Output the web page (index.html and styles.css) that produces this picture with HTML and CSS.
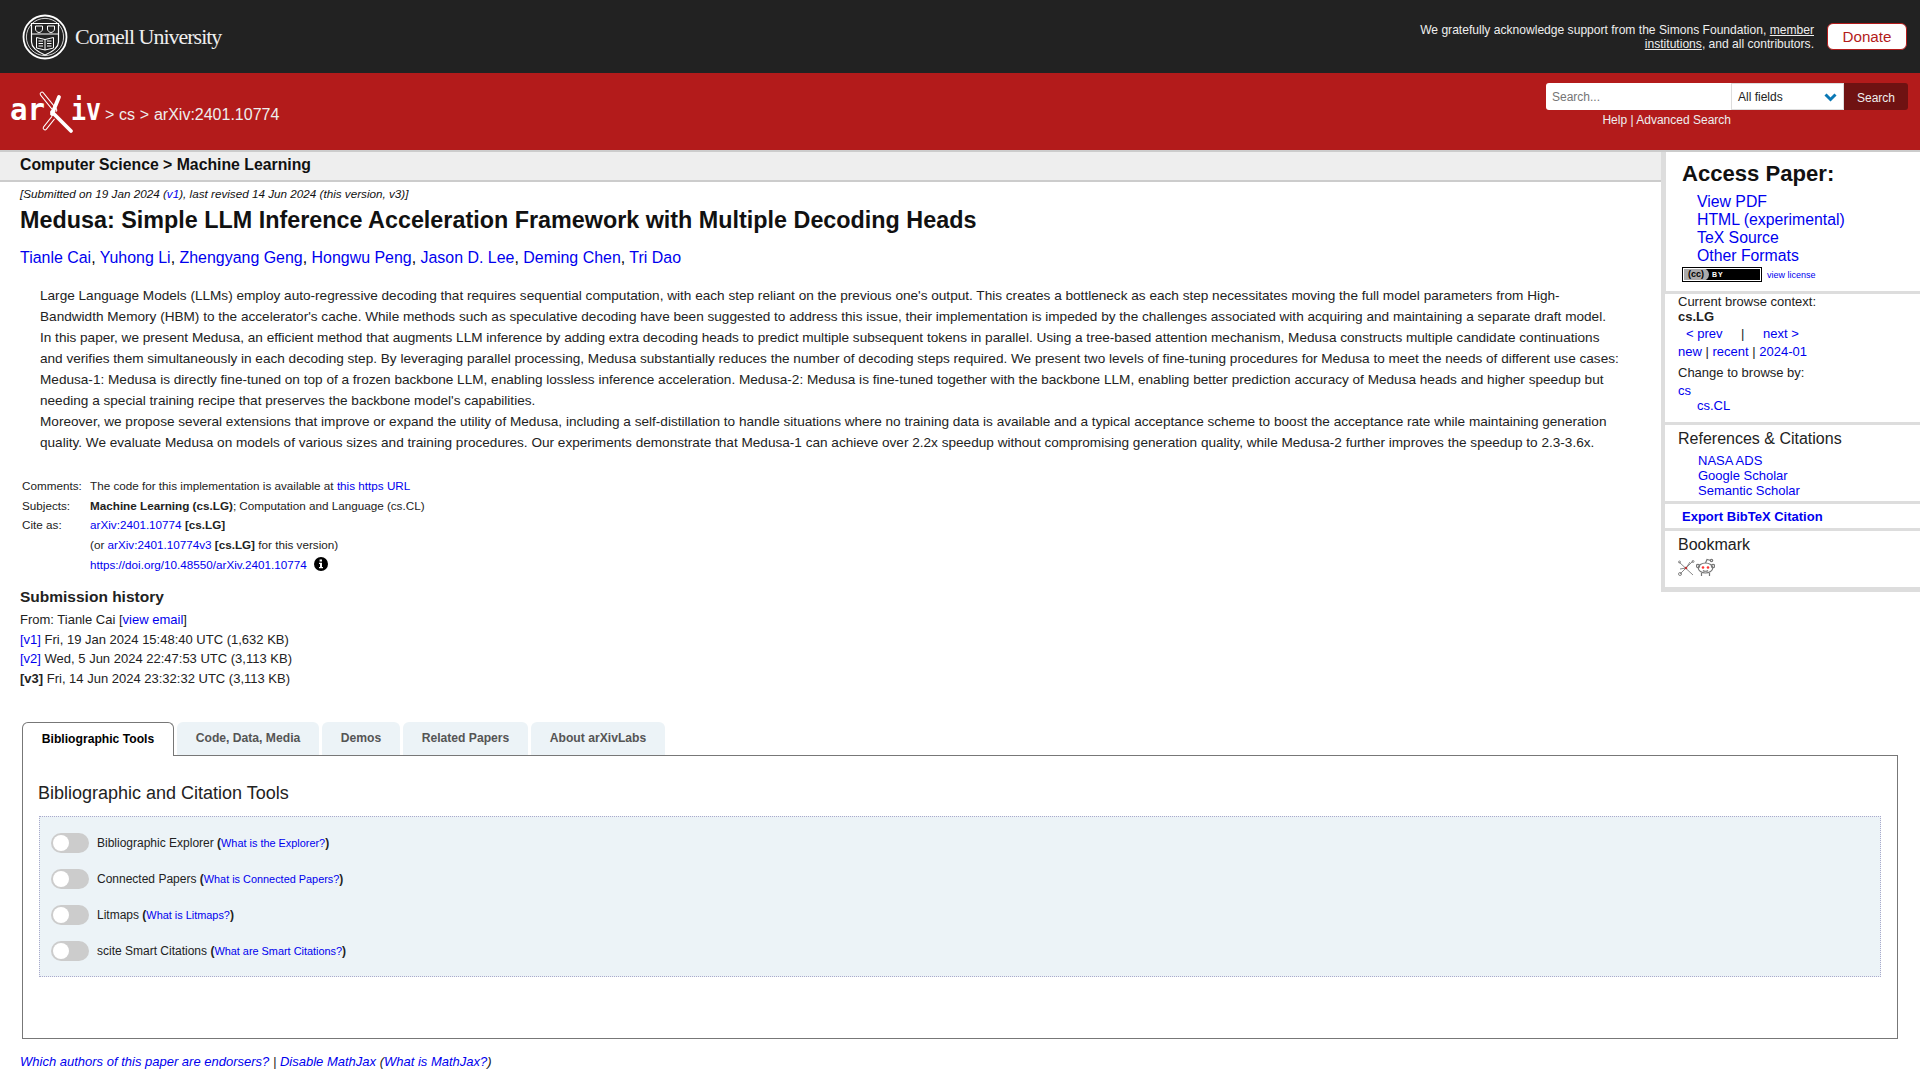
FILE: index.html
```html
<!DOCTYPE html>
<html lang="en">
<head>
<meta charset="utf-8">
<title>Medusa: Simple LLM Inference Acceleration Framework with Multiple Decoding Heads</title>
<link rel="stylesheet" href="styles.css">
</head>
<body>
<header class="cu-bar">
  <div class="cu-logo">
    <svg class="seal" width="46" height="46" viewBox="0 0 46 46" fill="none" stroke="#fff">
      <circle cx="23" cy="23" r="21.5" stroke-width="1.8"/>
      <circle cx="23" cy="23" r="18.6" stroke-width=".8"/>
      <path d="M9.5 9.5H36.5V28C36.5 34 30 38 23 41C16 38 9.5 34 9.5 28Z" stroke-width="1.2"/>
      <path d="M9.5 20H36.5" stroke-width="1"/>
      <path d="M13.5 12H20.5V15C20.5 17 18.5 18.5 17 18.5C15.5 18.5 13.5 17 13.5 15ZM25.5 12H32.5V15C32.5 17 30.5 18.5 29 18.5C27.5 18.5 25.5 17 25.5 15Z" stroke-width="1"/>
      <path d="M14.5 23.5L23 25.5L31.5 23.5V34L23 36L14.5 34ZM23 25.5V36M16.5 27H21M16.5 29.5H21M16.5 32H21M25 27H29.5M25 29.5H29.5M25 32H29.5" stroke-width="1"/>
    </svg>
    <span class="cu-name">Cornell University</span>
  </div>
  <div class="cu-right">
    <p class="ack">We gratefully acknowledge support from the Simons Foundation, <a href="#">member institutions</a>, and all contributors.</p>
    <a class="donate" href="#">Donate</a>
  </div>
</header>

<div class="red-bar">
  <div class="crumbs">
    <svg class="arxiv-logo" width="92" height="42" viewBox="0 0 92 42">
      <text class="logo-text" x="0" y="28" textLength="35" lengthAdjust="spacingAndGlyphs">ar</text>
      <text class="logo-text" x="61" y="28" textLength="30" lengthAdjust="spacingAndGlyphs">iv</text>
      <path d="M32 2L45 18" stroke="#fff" stroke-width="4.6" stroke-linecap="round"/>
      <path d="M32 2L45 18" stroke="#b31b1b" stroke-width="2.6" stroke-linecap="round"/>
      <path d="M43 26L35 36" stroke="#fff" stroke-width="4.6" stroke-linecap="round"/>
      <path d="M43 26L35 36" stroke="#b31b1b" stroke-width="2.6" stroke-linecap="round"/>
      <path d="M42 20L61 40" stroke="#b31b1b" stroke-width="6"/>
      <path d="M42 20L61 39" stroke="#fff" stroke-width="3.8" stroke-linecap="round"/>
      <path d="M49 5L42 22" stroke="#fff" stroke-width="3.8" stroke-linecap="round"/>
    </svg>
    <span class="crumb-text">&gt; <a href="#">cs</a> &gt; arXiv:2401.10774</span>
  </div>
  <div class="search-area">
    <form class="search-form">
      <span class="search-input">Search...</span>
      <span class="search-select">All fields
        <svg width="13" height="9" viewBox="0 0 13 9" fill="none" stroke="#0a78b5" stroke-width="3"><path d="M1.5 1.5L6.5 6.5L11.5 1.5"/></svg>
      </span>
      <span class="search-btn">Search</span>
    </form>
    <div class="search-help"><a href="#">Help</a> | <a href="#">Advanced Search</a></div>
  </div>
</div>
<div class="rule"></div>

<div class="columns">
  <main class="left">
    <div class="subheader">Computer Science &gt; Machine Learning</div>
    <div class="dateline">[Submitted on 19 Jan 2024 (<a href="#">v1</a>), last revised 14 Jun 2024 (this version, v3)]</div>
    <h1 class="title">Medusa: Simple LLM Inference Acceleration Framework with Multiple Decoding Heads</h1>
    <div class="authors"><a href="#">Tianle Cai</a>, <a href="#">Yuhong Li</a>, <a href="#">Zhengyang Geng</a>, <a href="#">Hongwu Peng</a>, <a href="#">Jason D. Lee</a>, <a href="#">Deming Chen</a>, <a href="#">Tri Dao</a></div>
    <blockquote class="abstract">Large Language Models (LLMs) employ auto-regressive decoding that requires sequential computation, with each step reliant on the previous one's output. This creates a bottleneck as each step necessitates moving the full model parameters from High-Bandwidth Memory (HBM) to the accelerator's cache. While methods such as speculative decoding have been suggested to address this issue, their implementation is impeded by the challenges associated with acquiring and maintaining a separate draft model.<br>
In this paper, we present Medusa, an efficient method that augments LLM inference by adding extra decoding heads to predict multiple subsequent tokens in parallel. Using a tree-based attention mechanism, Medusa constructs multiple candidate continuations and verifies them simultaneously in each decoding step. By leveraging parallel processing, Medusa substantially reduces the number of decoding steps required. We present two levels of fine-tuning procedures for Medusa to meet the needs of different use cases:<br>
Medusa-1: Medusa is directly fine-tuned on top of a frozen backbone LLM, enabling lossless inference acceleration. Medusa-2: Medusa is fine-tuned together with the backbone LLM, enabling better prediction accuracy of Medusa heads and higher speedup but needing a special training recipe that preserves the backbone model's capabilities.<br>
Moreover, we propose several extensions that improve or expand the utility of Medusa, including a self-distillation to handle situations where no training data is available and a typical acceptance scheme to boost the acceptance rate while maintaining generation quality. We evaluate Medusa on models of various sizes and training procedures. Our experiments demonstrate that Medusa-1 can achieve over 2.2x speedup without compromising generation quality, while Medusa-2 further improves the speedup to 2.3-3.6x.</blockquote>
    <table class="meta">
      <tr><td class="lab">Comments:</td><td>The code for this implementation is available at <a href="#">this https URL</a></td></tr>
      <tr><td class="lab">Subjects:</td><td><b>Machine Learning (cs.LG)</b>; Computation and Language (cs.CL)</td></tr>
      <tr><td class="lab">Cite as:</td><td><a href="#">arXiv:2401.10774</a> <b>[cs.LG]</b></td></tr>
      <tr><td></td><td>(or <a href="#">arXiv:2401.10774v3</a> <b>[cs.LG]</b> for this version)</td></tr>
      <tr><td></td><td><a href="#">https://doi.org/10.48550/arXiv.2401.10774</a>
        <svg class="info" width="14" height="14" viewBox="0 0 14 14"><circle cx="7" cy="7" r="7" fill="#000"/><path d="M5.6 2.6H8V4.6H5.6ZM5 5.8H8V9.9H9V11.2H5V9.9H6V7.1H5Z" fill="#fff"/></svg></td></tr>
    </table>
    <section class="history">
      <h2>Submission history</h2>
      <div>From: Tianle Cai [<a href="#">view email</a>]</div>
      <div><a href="#">[v1]</a> Fri, 19 Jan 2024 15:48:40 UTC (1,632 KB)</div>
      <div><a href="#">[v2]</a> Wed, 5 Jun 2024 22:47:53 UTC (3,113 KB)</div>
      <div><b>[v3]</b> Fri, 14 Jun 2024 23:32:32 UTC (3,113 KB)</div>
    </section>
  </main>

  <aside class="side">
    <section class="s-access">
      <h2>Access Paper:</h2>
      <ul>
        <li><a href="#">View PDF</a></li>
        <li><a href="#">HTML (experimental)</a></li>
        <li><a href="#">TeX Source</a></li>
        <li><a href="#">Other Formats</a></li>
      </ul>
      <div class="license">
        <span class="cc"><span class="cc-l">(cc)</span><span class="cc-r">BY</span></span>
        <a href="#">view license</a>
      </div>
    </section>
    <section class="s-browse">
      <div>Current browse context:</div>
      <div class="ctx">cs.LG</div>
      <div class="prevnext"><a href="#">&lt;&nbsp;prev</a><span>|</span><a href="#">next&nbsp;&gt;</a></div>
      <div class="newrec"><a href="#">new</a> | <a href="#">recent</a> | <a href="#">2024-01</a></div>
      <div class="change">Change to browse by:</div>
      <div class="cs"><a href="#">cs</a></div>
      <div class="cscl"><a href="#">cs.CL</a></div>
    </section>
    <section class="s-refs">
      <h3>References &amp; Citations</h3>
      <ul>
        <li><a href="#">NASA ADS</a></li>
        <li><a href="#">Google Scholar</a></li>
        <li><a href="#">Semantic Scholar</a></li>
      </ul>
    </section>
    <section class="s-export"><a href="#">Export BibTeX Citation</a></section>
    <section class="s-book">
      <h3>Bookmark</h3>
      <div class="book-icons">
        <svg width="17" height="17" viewBox="0 0 17 17" fill="none" stroke="#888" stroke-width="1"><path d="M1 2L15 15M15 1L2 14M2 9L8 8M8 8L12 2"/><circle cx="8" cy="8" r="1.3" fill="#b33" stroke="none"/><circle cx="2" cy="14" r="1.5"/><circle cx="15" cy="1.5" r="1"/><circle cx="1.5" cy="2" r="1"/></svg>
        <svg width="19" height="19" viewBox="0 0 19 19" fill="none" stroke="#777" stroke-width="1.2"><ellipse cx="9.5" cy="10" rx="7.2" ry="5"/><circle cx="2" cy="8" r="1.6"/><circle cx="17" cy="8" r="1.6"/><path d="M9.5 5L11 1.5L15 2.5"/><circle cx="15.5" cy="2.5" r="1.2"/><circle cx="7" cy="9.5" r="1.3" fill="#f33" stroke="none"/><circle cx="12" cy="9.5" r="1.3" fill="#f33" stroke="none"/><path d="M7 12.5C8 13.5 11 13.5 12 12.5M5.5 15V18M13.5 15V18"/></svg>
      </div>
    </section>
  </aside>
</div>

<div class="labs">
  <nav class="tabs">
    <span class="tab active">Bibliographic Tools</span>
    <span class="tab t2">Code, Data, Media</span>
    <span class="tab t3">Demos</span>
    <span class="tab t4">Related Papers</span>
    <span class="tab t5">About arXivLabs</span>
  </nav>
  <div class="panel">
    <h2>Bibliographic and Citation Tools</h2>
    <div class="tools">
      <div class="tool"><span class="toggle"></span><span>Bibliographic Explorer <b>(</b><a href="#">What is the Explorer?</a><b>)</b></span></div>
      <div class="tool"><span class="toggle"></span><span>Connected Papers <b>(</b><a href="#">What is Connected Papers?</a><b>)</b></span></div>
      <div class="tool"><span class="toggle"></span><span>Litmaps <b>(</b><a href="#">What is Litmaps?</a><b>)</b></span></div>
      <div class="tool"><span class="toggle"></span><span>scite Smart Citations <b>(</b><a href="#">What are Smart Citations?</a><b>)</b></span></div>
    </div>
  </div>
</div>
<div class="foot"><a href="#">Which authors of this paper are endorsers?</a> | <a href="#">Disable MathJax</a> (<a href="#">What is MathJax?</a>)</div>
</body>
</html>
```
FILE: styles.css
```css
* { box-sizing: border-box; }
html, body { margin: 0; padding: 0; height: 1080px; overflow: hidden; }
body { font-family: "Liberation Sans", Arial, sans-serif; color: #000; background: #fff; font-size: 16px; }
a { color: #0000ee; text-decoration: none; }
h1, h2, h3, p, ul, blockquote { margin: 0; padding: 0; }
ul { list-style: none; }

.cu-bar { height: 73px; background: #222; display: flex; justify-content: space-between; align-items: center; color: #fff; padding: 0 13px 0 22px; }
.cu-logo { display: flex; align-items: center; gap: 7px; }
.seal { display: block; }
.cu-name { font-family: "Liberation Serif", serif; font-size: 22px; letter-spacing: -1px; color: #eee; }
.cu-right { display: flex; align-items: center; gap: 13px; }
.ack { width: 420px; text-align: right; font-size: 12.08px; line-height: 14px; color: #eee; }
.ack a { color: #eee; text-decoration: underline; }
.donate { width: 80px; height: 27px; background: #fff; color: #b31b1b; border: 1px solid #b31b1b; border-radius: 6px; font-size: 15.2px; line-height: 25px; text-align: center; }

.red-bar { height: 77px; background: #b31b1b; display: flex; justify-content: space-between; color: #fff; padding: 0 12px 0 10px; }
.crumbs { display: flex; align-items: flex-start; padding-top: 19px; }
.arxiv-logo { display: block; overflow: visible; }
.logo-text { font-family: "DejaVu Sans Mono", monospace; font-size: 31px; font-weight: 700; fill: #fff; }
.crumb-text { font-size: 16px; margin-left: 3px; padding-top: 14px; color: #eee; word-spacing: .3px; }
.crumb-text a { color: #eee; }
.search-area { width: 362px; padding-top: 10px; }
.search-form { display: flex; height: 27px; }
.search-input { width: 185px; background: #fff; color: #757575; font-size: 12px; line-height: 29px; padding-left: 6px; border-radius: 3px 0 0 3px; }
.search-select { width: 113px; background: #fff; border: 1px solid #ddd; color: #222; font-size: 12px; line-height: 25px; padding: 1px 6px 0; display: flex; justify-content: space-between; align-items: center; }
.search-btn { width: 64px; background: #6f1212; color: #eee; font-size: 12px; line-height: 30px; text-align: center; border-radius: 0 3px 3px 0; }
.search-help { width: 185px; font-size: 12px; line-height: 14px; margin-top: 3px; text-align: right; color: #eee; white-space: nowrap; }
.search-help a { color: #eee; }
.rule { height: 2px; background: #ccc; }

.columns { display: flex; align-items: flex-start; }
.left { width: 1661px; height: 570px; flex: none; }
.subheader { height: 30px; background: #eee; border-bottom: 2px solid #ccc; font-weight: 700; font-size: 15.8px; line-height: 26px; padding-left: 20px; color: #111; }
.dateline { font-size: 11.7px; font-style: italic; line-height: 14px; margin: 5px 0 0 20px; color: #111; }
.title { font-size: 23.35px; line-height: 28px; font-weight: 700; margin: 5px 0 0 20px; color: #111; }
.authors { font-size: 15.95px; line-height: 20px; margin: 14px 0 0 20px; }
.abstract { font-size: 13.6px; line-height: 21px; margin: 17px 40px 0 40px; color: #222; }
.meta { border-collapse: collapse; margin: 23px 0 0 20px; font-size: 11.7px; color: #222; }
.meta td { padding: 0; height: 19.7px; line-height: 14px; vertical-align: middle; white-space: nowrap; }
.meta .lab { width: 70px; padding-left: 2px; }
.info { margin: -4px 0 -4px 4px; vertical-align: 2px; }
.history { margin: 13px 0 0 20px; font-size: 13px; line-height: 19.5px; color: #222; }
.history h2 { font-size: 15.5px; line-height: 20px; font-weight: 700; color: #222; margin-bottom: 3px; }

.side { width: 259px; flex: none; background: #ddd; padding: 0 0 5px 4px; }
.side section { background: #fff; margin-bottom: 3px; padding-left: 13px; color: #222; }
.side section:last-child { margin-bottom: 0; }
.s-access { height: 139px; padding-top: 9px; margin-left: 1px; }
.side .s-access { padding-left: 16px; }
.s-access h2 { font-size: 22.1px; line-height: 26px; font-weight: 700; color: #111; }
.s-access ul { margin: 6px 0 0 15px; font-size: 15.8px; line-height: 18px; }
.license { display: flex; align-items: center; gap: 5px; font-size: 9px; margin-top: 2px; }
.cc { display: flex; width: 80px; height: 15px; border: 1px solid #000; background: #000; outline: 1px solid #fff; outline-offset: -2px; }
.cc-l { width: 26px; background: #aaa; border-radius: 0 7px 7px 0; font-size: 9px; font-weight: 700; line-height: 13px; text-align: center; color: #000; }
.cc-r { color: #fff; font-size: 7px; line-height: 13px; font-weight: 700; margin-left: 3px; letter-spacing: 1px; }
.s-browse { height: 128px; font-size: 13px; line-height: 15px; }
.ctx { font-weight: 700; }
.prevnext { display: flex; margin-top: 1px; line-height: 18px; padding-left: 8px; }
.prevnext a:first-child { width: 55px; }
.prevnext span { width: 22px; }
.newrec { line-height: 18px; }
.change { margin-top: 3px; line-height: 18px; }
.cs { line-height: 18px; }
.cscl { padding-left: 19px; line-height: 12px; }
.s-refs { height: 76px; padding-top: 4px; font-size: 13px; }
.side h3 { font-size: 16px; line-height: 20px; font-weight: 400; color: #222; }
.s-refs ul { margin: 4px 0 0 20px; line-height: 15px; }
.side .s-export { height: 24px; font-size: 13px; font-weight: 700; line-height: 25px; padding-left: 17px; }
.s-book { height: 56px; padding-top: 4px; }
.book-icons { display: flex; gap: 1px; margin-top: 3px; align-items: flex-end; }

.labs { margin: 0 22px; }
.tabs { display: flex; height: 33px; align-items: flex-start; }
.tab { height: 33px; background: #ecf3f7; border-radius: 6px 6px 0 0; font-size: 12.15px; font-weight: 700; color: #555; text-align: center; line-height: 32px; margin-left: 3px; }
.tab.active { width: 152px; margin-left: 0; background: #fff; color: #000; border: 1px solid #777; border-bottom: 0; line-height: 33px; height: 34px; position: relative; z-index: 1; }
.t2 { width: 142px; margin-left: 3px; }
.t3 { width: 78px; }
.t4 { width: 125px; }
.t5 { width: 134px; }
.panel { height: 284px; border: 1px solid #777; padding: 16px; }
.panel h2 { font-size: 18px; font-weight: 400; line-height: 40px; margin: 1px 0 0 -1px; color: #222; }
.tools { height: 161px; margin-top: 3px; background: #ecf3f7; border: 1px dotted #aac; padding: 8px 11px; }
.tool { height: 36px; display: flex; align-items: center; gap: 8px; font-size: 12px; color: #222; }
.tool a { font-size: 10.9px; }
.toggle { width: 38px; height: 20px; background: #ccc; border-radius: 10px; position: relative; flex: none; }
.toggle::before { content: ""; position: absolute; left: 2px; top: 2px; width: 16px; height: 16px; border-radius: 50%; background: #fff; }
.foot { margin: 15px 0 0 20px; font-size: 13px; font-style: italic; line-height: 16px; color: #222; }
```
